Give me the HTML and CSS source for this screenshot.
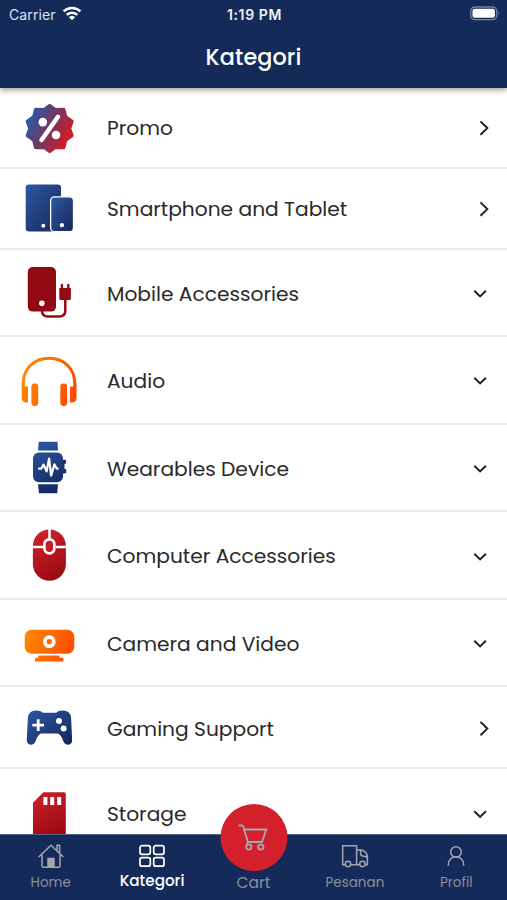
FILE: index.html
```html
<!DOCTYPE html>
<html lang="id">
<head>
<meta charset="utf-8">
<meta name="viewport" content="width=device-width, initial-scale=1">
<title>Kategori</title>
<link rel="stylesheet" href="styles.css">
</head>
<body>
<svg class="defs" width="0" height="0" aria-hidden="true">
  <defs>
    <linearGradient id="promo" gradientUnits="userSpaceOnUse" x1="8" y1="18" x2="55" y2="43"><stop offset="0.1" stop-color="#2f56a0"/><stop offset="0.5" stop-color="#76355f"/><stop offset="0.85" stop-color="#c9202b"/></linearGradient>
    <linearGradient id="blue" x1="0" y1="0" x2="1" y2="1"><stop offset="0" stop-color="#2d58a2"/><stop offset="1" stop-color="#14275a"/></linearGradient>
    <linearGradient id="bluedown" gradientUnits="userSpaceOnUse" x1="20" y1="4" x2="44" y2="56"><stop offset="0" stop-color="#2d58a2"/><stop offset="1" stop-color="#12245a"/></linearGradient>
    <linearGradient id="red" gradientUnits="userSpaceOnUse" x1="16" y1="4" x2="46" y2="56"><stop offset="0" stop-color="#d3232b"/><stop offset="1" stop-color="#94080f"/></linearGradient>
    <linearGradient id="orange" gradientUnits="userSpaceOnUse" x1="6" y1="20" x2="58" y2="40"><stop offset="0" stop-color="#ff8a00"/><stop offset="1" stop-color="#ff4800"/></linearGradient>
  </defs>
</svg>
<div class="app">
  <header class="header">
    <div class="status">
      <div class="carrier"><span>Carrier</span>
        <svg width="20" height="15" viewBox="0 0 20 15" fill="none" stroke="#fff" stroke-width="2.5"><path d="M1.6 5.4a12 12 0 0 1 16.8 0M4.7 8.8a7.6 7.6 0 0 1 10.6 0"/><path d="M7 11.3a4.3 4.3 0 0 1 6 0l-3 3z" fill="#fff" stroke="none"/></svg>
      </div>
      <div class="clock">1:19 PM</div>
      <div class="battery"><svg width="31" height="16" viewBox="0 0 31 16"><rect x="1.7" y="1" width="26" height="12.6" rx="4" fill="none" stroke="#76829f" stroke-width="1.3"/><rect x="3.5" y="2.8" width="22.4" height="9" rx="2" fill="#fff"/><path d="M29 5.2q1.7 2 0 4z" fill="#8d97b0"/></svg></div>
    </div>
    <h1 class="title">Kategori</h1>
  </header>
  <main class="list">
    <a class="row promo">
      <svg class="icon" viewBox="0 0 64 60"><path d="M31.7 7.5L37.6 11.800L45.700 11.400L47.700 18.900L54 23.400L51.500 30.500L54 37.600L47.700 42.100L45.700 49.600L37.600 49.200L31.700 53.500L25.800 49.200L17.700 49.600L15.700 42.100L9.400 37.600L11.900 30.500L9.400 23.400L15.700 18.900L17.700 11.400L25.800 11.800Z" fill="url(#promo)" stroke="url(#promo)" stroke-width="3.400" stroke-linejoin="round"/><path d="M40 18.800L23.500 42" stroke="#fff" stroke-width="4.500" stroke-linecap="round"/><circle cx="24.800" cy="24.100" r="4.300" fill="#fff"/><circle cx="38" cy="37" r="4.300" fill="#fff"/></svg>
      <span class="label">Promo</span>
      <svg class="arrow" viewBox="0 0 24 24"><path d="M8.500 5.400l6.800 6.700-6.800 6.700"/></svg>
    </a>
    <a class="row phone">
      <svg class="icon" viewBox="0 0 64 60"><rect x="7.7" y="6.4" width="35.3" height="47" rx="3.2" fill="url(#blue)"/><rect x="32.6" y="18.8" width="22.9" height="34.9" rx="4" fill="url(#blue)" stroke="#fff" stroke-width="1.3"/><circle cx="25.3" cy="47.7" r="2" fill="#fff"/><circle cx="43.9" cy="47.2" r="2.1" fill="#fff"/></svg>
      <span class="label">Smartphone and Tablet</span>
      <svg class="arrow" viewBox="0 0 24 24"><path d="M8.500 5.400l6.800 6.700-6.800 6.700"/></svg>
    </a>
    <a class="row tall mobile">
      <svg class="icon" viewBox="0 0 64 60"><path d="M24 44v4.500q0 6 6 6h11q6.300 0 6.300-6V36" fill="none" stroke="#950b12" stroke-width="2.500"/><rect x="9.800" y="5" width="28.200" height="44.600" rx="5" fill="#920a11"/><path d="M41.300 26h1.400v-3.600q1.200-1.200 2.400 0V26h4v-3.600q1.200-1.200 2.400 0V26h1.400v10.500q0 1.600-1.600 1.600h-8.400q-1.600 0-1.600-1.600z" fill="#950b12"/><circle cx="23.800" cy="41.300" r="2.800" fill="#fff"/></svg>
      <span class="label">Mobile Accessories</span>
      <svg class="arrow down" viewBox="0 0 24 24"><path d="M6.3 9.7l5.8 5.7 5.8-5.7"/></svg>
    </a>
    <a class="row tall audio">
      <svg class="icon" viewBox="0 -1.5 64 60"><path d="M5.300 36V32C5.300 17 16 6.800 31 6.800S56.700 17 56.700 32v4" fill="none" stroke="url(#orange)" stroke-width="3"/><path d="M3.700 31L6 35h4v16Q3.700 51.800 3.700 46zM58.500 31L56 35h-4v16q6.500.8 6.500-5zM13.400 35q0-3 3-3h1q2.800 0 2.800 3v16.600q0 2.800-2.800 2.800h-1q-3 0-3-2.800zM42.300 35q0-3 3-3h1q2.800 0 2.800 3v16.600q0 2.800-2.800 2.800h-1q-3 0-3-2.800z" fill="url(#orange)"/></svg>
      <span class="label">Audio</span>
      <svg class="arrow down" viewBox="0 0 24 24"><path d="M6.3 9.7l5.8 5.7 5.8-5.7"/></svg>
    </a>
    <a class="row tall watch">
      <svg class="icon" viewBox="0 0 64 60"><path d="M20.800 4.700h18.700L40 13.500H20zM20 47.200h20l-.8 9H21z" fill="url(#bluedown)"/><rect x="15" y="15.600" width="30" height="29.600" rx="6" fill="url(#bluedown)"/><path d="M44.500 22.800h2q1.500-.2 1.500 1v2.500l-1.500.7v5h1q.8.200.8 1.500V36l-1.800.5h-2z" fill="#19357a"/><path d="M20.200 31.600h3l2.400-4 3 6.800 2.500-12.800 2 17 3.300-11.300 2.200 4.300h2" fill="none" stroke="#fff" stroke-width="2.200" stroke-linejoin="round"/></svg>
      <span class="label">Wearables Device</span>
      <svg class="arrow down" viewBox="0 0 24 24"><path d="M6.3 9.7l5.8 5.7 5.8-5.7"/></svg>
    </a>
    <a class="row tall mouse">
      <svg class="icon" viewBox="0 0 64 60"><rect x="14.900" y="4.500" width="33" height="51.300" rx="16.500" fill="url(#red)"/><path d="M31.500 4v12M14 22h11m13 0h11" stroke="#fff" stroke-width="2.500"/><rect x="26.400" y="14.300" width="10" height="14" rx="5" fill="#c91c25" stroke="#fff" stroke-width="2.700"/></svg>
      <span class="label">Computer Accessories</span>
      <svg class="arrow down" viewBox="0 0 24 24"><path d="M6.3 9.7l5.8 5.7 5.8-5.7"/></svg>
    </a>
    <a class="row tall camera">
      <svg class="icon" viewBox="0 -0.5 64 60"><rect x="6.700" y="16.300" width="49.600" height="24" rx="7" fill="url(#orange)"/><path d="M20.200 42h21.300v2.300H44q1.500 0 1.500 1.400v2.200H17v-2.200q0-1.400 1.500-1.400h1.700z" fill="url(#orange)"/><circle cx="31.300" cy="28.200" r="4.500" fill="none" stroke="#fff" stroke-width="3.800"/></svg>
      <span class="label">Camera and Video</span>
      <svg class="arrow down" viewBox="0 0 24 24"><path d="M6.3 9.7l5.8 5.7 5.8-5.7"/></svg>
    </a>
    <a class="row gaming">
      <svg class="icon" viewBox="0 0 64 60"><path d="M9.900 20.500q1-6.800 8-7 4.500-.1 7 2.200h13.200q2.500-2.300 7-2.200 7 .2 8 7l1 22q.2 5-4 5.200-3.400 0-5-4-1.900-6-5.200-7.200H23q-3.300 1.200-5.200 7.200-1.600 4-5 4-4.200-.2-4-5.200z" fill="url(#blue)"/><path d="M20.200 22.300v11.600M14.400 28.100H26" stroke="#fff" stroke-width="2.800"/><circle cx="41" cy="24" r="3" fill="#fff"/><circle cx="45.600" cy="31.600" r="3" fill="#fff"/></svg>
      <span class="label">Gaming Support</span>
      <svg class="arrow" viewBox="0 0 24 24"><path d="M8.500 5.900l6.800 6.700-6.800 6.700"/></svg>
    </a>
    <a class="row tall storage">
      <svg class="icon" viewBox="0 -0.5 64 60"><path d="M15 20.200L25.300 9.800H46q1.800 0 1.800 1.800V60H15z" fill="url(#red)"/><path d="M27.400 14.600v8m6.800-8v8m7-8v8" stroke="#fff" stroke-width="4"/></svg>
      <span class="label">Storage</span>
      <svg class="arrow down" viewBox="0 0 24 24"><path d="M6.300 10.200l5.800 5.700 5.800-5.700"/></svg>
    </a>
  </main>
  <nav class="tabs">
    <a class="tab home"><svg viewBox="0 0 28 28"><path d="M1.700 15L14 3.200 26.300 15M5 13v11q0 1.300 1.300 1.300h15.400Q23 25.300 23 24V13M20 8.500V3.300h2.600V11"/><path d="M11 25v-8.500h6V25z" fill="#a4a6af"/></svg><span>Home</span></a>
    <a class="tab active kategori"><svg viewBox="0 0 28 28"><rect x="2" y="3.700" width="10.300" height="8.600" rx="2"/><rect x="15.700" y="3.700" width="10.300" height="8.600" rx="2"/><rect x="2" y="15.600" width="10.300" height="8.600" rx="2"/><rect x="15.700" y="15.600" width="10.300" height="8.600" rx="2"/></svg><span>Kategori</span></a>
    <a class="tab cart"><i class="bubble"><svg viewBox="0 0 34 34"><path d="M2 5.500h3.200q1.200 0 1.700 1.200L11.300 22H25.500L29.800 9.500H8M11.300 22l-1 2.500"/><circle cx="12.300" cy="27" r="2.600"/><circle cx="24.300" cy="27" r="2.600"/></svg></i><span>Cart</span></a>
    <a class="tab pesanan"><svg viewBox="0 0 28 28"><path d="M4 22.800H1.700V3.800H15.600v19H10M15.600 8h4.900q5.900 1.600 5.900 8v6.800h-1.800M15.600 22.800h2.800M19.600 8v3.500q0 2 2 2.500l4.500 1"/><circle cx="7" cy="22" r="2.700"/><circle cx="21.400" cy="22" r="2.700"/></svg><span>Pesanan</span></a>
    <a class="tab profil"><svg viewBox="0 0 28 28"><circle cx="14" cy="10" r="5.300"/><path d="M6.300 23.800v-1.300a7.700 7.700 0 0 1 15.400 0v1.300"/></svg><span>Profil</span></a>
  </nav>
</div>
</body>
</html>
```
FILE: styles.css
```css
* { box-sizing: border-box; }
body { margin: 0; background: #fff; font-family: Poppins, Inter, "Liberation Sans", sans-serif; color: #292929; }
.defs { position: absolute; }
.app { height: 900px; display: flex; flex-direction: column; overflow: hidden; }
.header { position: relative; flex: none; height: 88px; background: #142a58; color: #fff; box-shadow: 0 2px 6px rgba(0, 0, 0, .4); }
.status { display: grid; grid-template-columns: 1fr auto 1fr; align-items: center; height: 28px; padding: 0 7px 0 9px; font-family: Inter, sans-serif; }
.carrier { display: flex; align-items: center; gap: 6px; font-size: 14px; letter-spacing: .1px; color: #dce2ee; }
.carrier svg { margin-top: -2px; }
.clock { font-size: 14px; font-weight: 600; letter-spacing: .6px; color: #f0f3f8; }
.battery { display: flex; justify-content: flex-end; }
.title { margin: 14px 0 0; text-align: center; font-size: 22.3px; line-height: 32px; font-weight: 500; letter-spacing: .1px; }
.list { flex: 1; min-height: 0; overflow: hidden; }
.row { display: flex; align-items: center; height: 80.5px; padding: 0 11px 0 18px; border-bottom: 2px solid #ebebeb; }
.row.promo { height: 81px; }
.row.tall { height: 87.6px; padding-right: 15px; }
.row.gaming { height: 82px; }
.icon { flex: none; width: 64px; height: 60px; }
.label { flex: 1; margin: 2.6px 0 0 25px; font-size: 20.2px; line-height: 30px; white-space: nowrap; }
.promo .label { margin-top: 1px; }
.phone .label { margin-top: 1.5px; }
.storage .label { margin-top: 3.6px; }
.arrow { width: 24px; height: 24px; margin-top: 1px; fill: none; stroke: #222; stroke-width: 2; }
.tabs { position: relative; flex: none; display: grid; grid-template-columns: repeat(5, 1fr); height: 66.5px; background: #142a58; border-top: 1px solid #526184; }
.tab { position: relative; display: flex; flex-direction: column; align-items: center; padding-top: 7px; color: #898f9f; font-size: 13.5px; line-height: 20px; }
.tab svg { width: 28px; height: 28px; fill: none; stroke: #a4a6af; stroke-width: 1.5; }
.tab span { margin-top: 3px; }
.tab.active { color: #fff; font-size: 15.2px; font-weight: 500; }
.tab.active svg { stroke: #fff; stroke-width: 1.7; }
.tab.active span { margin-top: 1.5px; }
.tab.cart { font-size: 15.5px; }
.tab.cart span { margin-top: 31.5px; }
.bubble { position: absolute; top: -31px; left: 50%; display: flex; align-items: center; justify-content: center; width: 67px; height: 67px; margin-left: .5px; transform: translateX(-50%); border-radius: 50%; background: #d4202b; }
.bubble svg { width: 34px; height: 34px; stroke-width: 1.9; }
```
